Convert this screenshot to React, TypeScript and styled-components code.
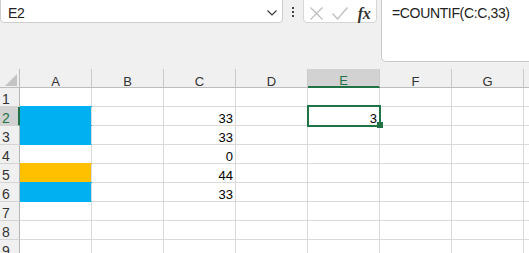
import React from 'react';
import styled, { createGlobalStyle } from 'styled-components';

const GREEN = '#217346';

const GlobalStyle = createGlobalStyle`
  html, body { margin: 0; padding: 0; background: #f0f0f0; overflow: hidden; }
  body { font-family: "Liberation Sans", Arial, sans-serif; }
`;

const Page = styled.div`
  width: 529px;
  height: 253px;
  overflow: hidden;
  background: #f0f0f0;
`;

const TopBar = styled.div`
  display: flex;
  align-items: flex-start;
  height: 69px;
`;

const NameBox = styled.div`
  box-sizing: border-box;
  flex: 0 0 283px;
  height: 27px;
  margin-top: -4px;
  padding: 6px 5px 0 7px;
  background: #fff;
  border: 1px solid #cdcdcd;
  border-radius: 4px;
  display: flex;
  align-items: center;
  justify-content: space-between;
  font-size: 14px;
  line-height: 16px;
  letter-spacing: -0.4px;
  color: #222;
`;

const Dots = styled.div`
  flex: 0 0 20px;
  display: flex;
  flex-direction: column;
  align-items: center;
  gap: 2px;
  padding-top: 7px;
`;

const Dot = styled.span`
  width: 2px;
  height: 2px;
  background: #444;
`;

const ButtonGroup = styled.div`
  box-sizing: border-box;
  flex: 0 0 74px;
  height: 27px;
  margin-top: -4px;
  padding-top: 8px;
  background: #fff;
  border: 1px solid #d6d6d6;
  border-radius: 4px;
  display: flex;
  align-items: center;
`;

const IconSlot = styled.span`
  width: 24px;
  height: 14px;
  display: flex;
  align-items: center;
  justify-content: center;
`;

const Fx = styled.span`
  font-family: "Liberation Serif", "Times New Roman", serif;
  font-style: italic;
  font-weight: bold;
  font-size: 16px;
  line-height: 14px;
  color: #333;
  letter-spacing: -0.5px;
`;

const FormulaBox = styled.div`
  box-sizing: border-box;
  flex: 1 0 auto;
  height: 66px;
  margin: -4px -12px 0 4px;
  padding: 8px 0 0 10px;
  background: #fff;
  border: 1px solid #c9c9c9;
  border-radius: 5px;
  font-size: 14px;
  line-height: 16px;
  letter-spacing: -0.35px;
  color: #222;
`;

const Grid = styled.div`
  display: grid;
  grid-template-columns: 20px repeat(8, 72px);
  grid-auto-rows: 19px;
`;

const Corner = styled.div`
  box-sizing: border-box;
  background: #f0f0f0;
  border-right: 1px solid #bdbdbd;
  border-bottom: 1px solid #bdbdbd;
  display: flex;
  align-items: flex-end;
  justify-content: flex-end;
  padding: 0 2px 1px 0;
`;

const Triangle = styled.span`
  width: 0;
  height: 0;
  border-left: 12px solid transparent;
  border-bottom: 12px solid #c4c4c4;
`;

const ColHeader = styled.div<{ $active?: boolean }>`
  box-sizing: border-box;
  background: ${p => (p.$active ? '#d2d2d2' : '#f0f0f0')};
  border-right: 1px solid #cacaca;
  border-bottom: ${p => (p.$active ? `2px solid ${GREEN}` : '1px solid #bdbdbd')};
  display: flex;
  align-items: flex-end;
  justify-content: center;
  font-size: 13px;
  line-height: 11px;
  color: ${p => (p.$active ? GREEN : '#333')};
`;

const RowHeader = styled.div<{ $active?: boolean }>`
  box-sizing: border-box;
  background: ${p => (p.$active ? '#d2d2d2' : '#f0f0f0')};
  border-right: ${p => (p.$active ? `2px solid ${GREEN}` : '1px solid #b5b5b5')};
  border-bottom: 1px solid #d4d4d4;
  display: flex;
  align-items: flex-end;
  padding-left: 2px;
  font-size: 14px;
  line-height: 14px;
  color: ${p => (p.$active ? GREEN : '#333')};
`;

const Cell = styled.div<{ $fill?: string; $active?: boolean }>`
  position: ${p => (p.$active ? 'relative' : 'static')};
  box-sizing: border-box;
  background: ${p => p.$fill ?? '#fff'};
  border-right: 1px solid #dadada;
  border-bottom: 1px solid ${p => p.$fill ?? '#dadada'};
  box-shadow: ${p => (p.$fill ? `0 -1px 0 ${p.$fill}` : 'none')};
  display: flex;
  align-items: flex-end;
  justify-content: flex-end;
  padding-right: 2px;
  font-size: 13px;
  line-height: 12px;
  color: #000;
`;

const Selection = styled.span`
  position: absolute;
  z-index: 2;
  box-sizing: border-box;
  top: -2px;
  left: -1px;
  right: -2px;
  bottom: -2px;
  border: 2px solid ${GREEN};
  pointer-events: none;
`;

const FillHandle = styled.span`
  position: absolute;
  right: -4px;
  bottom: -3px;
  width: 6px;
  height: 6px;
  background: ${GREEN};
`;

const COLS = ['A', 'B', 'C', 'D', 'E', 'F', 'G', 'H'];
const ROWS = [1, 2, 3, 4, 5, 6, 7, 8, 9];
const BLUE = '#00b0f0';
const ORANGE = '#ffc000';

const DATA: Record<string, { value?: string; fill?: string }> = {
  A2: { fill: BLUE },
  A3: { fill: BLUE },
  A5: { fill: ORANGE },
  A6: { fill: BLUE },
  C2: { value: '33' },
  C3: { value: '33' },
  C4: { value: '0' },
  C5: { value: '44' },
  C6: { value: '33' },
  E2: { value: '3' },
};

const ACTIVE_COL = 'E';
const ACTIVE_ROW = 2;

export default function App() {
  return (
    <Page>
      <GlobalStyle />
      <TopBar>
        <NameBox>
          <span>E2</span>
          <svg width="10" height="6" viewBox="0 0 10 6">
            <path d="M0.5 0.5 L5 5 L9.5 0.5" fill="none" stroke="#333" strokeWidth="1.1" />
          </svg>
        </NameBox>
        <Dots>
          <Dot />
          <Dot />
          <Dot />
        </Dots>
        <ButtonGroup>
          <IconSlot>
            <svg width="13" height="13" viewBox="0 0 13 13">
              <path d="M0.5 0.5 L12.5 12.5 M12.5 0.5 L0.5 12.5" stroke="#bdbdbd" strokeWidth="1.2" fill="none" />
            </svg>
          </IconSlot>
          <IconSlot>
            <svg width="16" height="13" viewBox="0 0 16 13">
              <path d="M0.5 6.5 L5.5 12 L15.5 0.5" stroke="#bdbdbd" strokeWidth="1.2" fill="none" />
            </svg>
          </IconSlot>
          <IconSlot>
            <Fx>fx</Fx>
          </IconSlot>
        </ButtonGroup>
        <FormulaBox>=COUNTIF(C:C,33)</FormulaBox>
      </TopBar>
      <Grid>
        <Corner>
          <Triangle />
        </Corner>
        {COLS.map(c => (
          <ColHeader key={c} $active={c === ACTIVE_COL}>
            {c}
          </ColHeader>
        ))}
        {ROWS.map(r => (
          <React.Fragment key={r}>
            <RowHeader $active={r === ACTIVE_ROW}>{r}</RowHeader>
            {COLS.map(c => {
              const d = DATA[`${c}${r}`];
              const active = c === ACTIVE_COL && r === ACTIVE_ROW;
              return (
                <Cell key={c} $fill={d?.fill} $active={active}>
                  {d?.value}
                  {active && (
                    <Selection>
                      <FillHandle />
                    </Selection>
                  )}
                </Cell>
              );
            })}
          </React.Fragment>
        ))}
      </Grid>
    </Page>
  );
}
